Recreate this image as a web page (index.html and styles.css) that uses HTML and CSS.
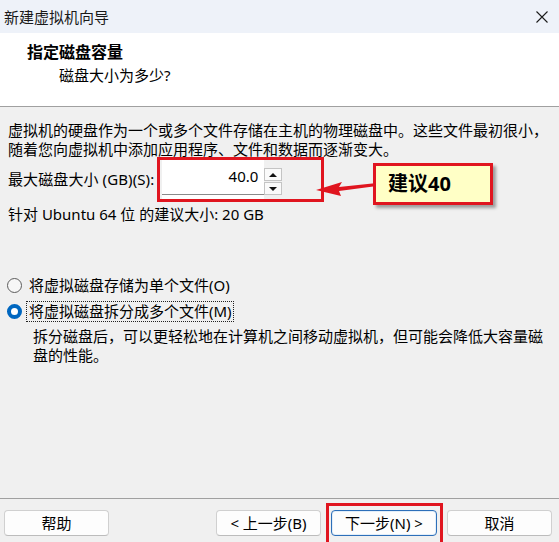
FILE: index.html
```html
<!DOCTYPE html>
<html lang="zh-CN">
<head>
<meta charset="utf-8">
<title>新建虚拟机向导</title>
<link rel="stylesheet" href="styles.css">
</head>
<body>
<div class="window">
  <div class="titlebar">
    <span class="title">新建虚拟机向导</span>
    <svg class="close" width="12" height="12" viewBox="0 0 12 12"><path d="M0.5 0.5 L11.5 11.5 M11.5 0.5 L0.5 11.5" stroke="#1b1b1b" stroke-width="1.1" fill="none"/></svg>
  </div>
  <div class="header">
    <div class="h-title">指定磁盘容量</div>
    <div class="h-sub">磁盘大小为多少?</div>
  </div>
  <div class="content">
    <p class="intro">虚拟机的硬盘作为一个或多个文件存储在主机的物理磁盘中。这些文件最初很小，<br>随着您向虚拟机中添加应用程序、文件和数据而逐渐变大。</p>
    <div class="size-row">
      <span class="size-label">最大磁盘大小 (GB)(S):</span>
      <div class="spin">
        <div class="spin-input">40.0</div>
        <div class="spin-btns">
          <div class="spin-btn"><span class="tri-up"></span></div>
          <div class="spin-btn"><span class="tri-down"></span></div>
        </div>
      </div>
      <svg class="arrow" width="75" height="28" viewBox="0 0 75 28"><polygon points="6,18 32,10 29,15 67,11 67,14 29,19 31,24" fill="#e0151f"/></svg>
      <div class="callout">建议40</div>
    </div>
    <p class="rec">针对 Ubuntu 64 位 的建议大小: 20 GB</p>
    <div class="radio">
      <span class="dot"></span>
      <span class="radio-text">将虚拟磁盘存储为单个文件(O)</span>
    </div>
    <div class="radio">
      <span class="dot checked"></span>
      <span class="radio-text focus">将虚拟磁盘拆分成多个文件(M)</span>
    </div>
    <p class="desc">拆分磁盘后，可以更轻松地在计算机之间移动虚拟机，但可能会降低大容量磁<br>盘的性能。</p>
  </div>
  <div class="footer">
    <button class="btn">帮助</button>
    <div class="btn-group">
      <button class="btn">&lt; 上一步(B)</button>
      <span class="mark-wrap"><button class="btn primary">下一步(N) &gt;</button></span>
      <button class="btn">取消</button>
    </div>
  </div>
</div>
</body>
</html>
```
FILE: styles.css
```css
* { box-sizing: border-box; }
html, body {
  margin: 0;
  padding: 0;
  background: #f0f0f0;
}
body {
  font-family: "Noto Sans", "Noto Sans CJK SC", sans-serif;
  font-size: 15px;
  color: #000;
}
.window {
  width: 559px;
  height: 542px;
  display: flex;
  flex-direction: column;
  overflow: hidden;
  background: #f0f0f0;
}
.titlebar {
  height: 33px;
  flex: none;
  background: #eef2f9;
  display: flex;
  align-items: center;
  justify-content: space-between;
  padding: 0 11px 0 4px;
}
.title {
  font-size: 15px;
  line-height: 20px;
  color: #1a1a1a;
}
.close { display: block; }

.header {
  flex: none;
  height: 74px;
  background: #fff;
  border-bottom: 1px solid #a0a0a0;
  padding-top: 9px;
}
.h-title {
  font-weight: bold;
  font-size: 16px;
  line-height: 20px;
  padding-left: 27px;
}
.h-sub {
  margin-top: 3px;
  font-size: 15px;
  line-height: 20px;
  padding-left: 59px;
}

.content {
  flex: 1;
  padding: 14px 8px 0 8px;
}
.intro {
  margin: 0;
  line-height: 19px;
}
.size-row {
  position: relative;
  display: flex;
  align-items: center;
  margin-top: -2px;
  height: 45px;
}
.size-label {
  line-height: 19px;
  margin-right: 3px;
  letter-spacing: 0.1px;
}
.spin {
  display: flex;
  height: 45px;
  width: 167px;
  border: 3px solid #e0151f;
  padding: 0 38px 0 2px;
}
.spin-input {
  width: 102px;
  height: 39px;
  background: linear-gradient(to bottom, #fff 0 34px, #8a8a8a 34px 35px, #fff 35px);
  display: flex;
  align-items: center;
  justify-content: flex-end;
  padding: 0 6px 6px 0;
  line-height: 19px;
}
.spin-btns {
  margin-top: 8px;
  width: 18px;
  display: flex;
  flex-direction: column;
  gap: 1px;
}
.spin-btn {
  height: 13px;
  background: #fafafa;
  border: 1px solid #c4c4c4;
  display: flex;
  align-items: center;
  justify-content: center;
}
.tri-up {
  width: 0; height: 0;
  border-left: 4px solid transparent;
  border-right: 4px solid transparent;
  border-bottom: 4px solid #111;
}
.tri-down {
  width: 0; height: 0;
  border-left: 4px solid transparent;
  border-right: 4px solid transparent;
  border-top: 4px solid #111;
}
.arrow {
  position: absolute;
  left: 302px;
  top: 15px;
}
.callout {
  position: absolute;
  left: 365px;
  top: 6px;
  width: 120px;
  height: 42px;
  background: #ffffc6;
  border: 3px solid #e0151f;
  box-shadow: 3px 3px 3px rgba(0,0,0,0.35);
  font-weight: bold;
  font-size: 20px;
  line-height: 24px;
  padding: 6px 0 0 12px;
}
.rec {
  margin: 3px 0 0 0;
  line-height: 19px;
}
.radio {
  display: flex;
  align-items: center;
  height: 26px;
}
.rec + .radio { margin-top: 48px; }
.dot {
  width: 15px;
  height: 15px;
  border-radius: 50%;
  border: 1px solid #5c5c5c;
  background: #f7f7f7;
  margin-left: -1px;
  margin-right: 4px;
  flex: none;
}
.dot.checked {
  border: 4.5px solid #0067c0;
  background: #fff;
}
.radio-text {
  line-height: 19px;
  padding: 0 1px 0 2px;
  border: 1px dotted transparent;
}
.radio-text.focus {
  border-color: #222;
}
.desc {
  margin: 3px 0 0 25px;
  line-height: 19px;
}

.footer {
  flex: none;
  height: 44px;
  border-top: 1px solid #a0a0a0;
  display: flex;
  justify-content: space-between;
  padding: 11px 7px 0 4px;
}
.btn-group {
  display: flex;
  gap: 10px;
}
.btn {
  width: 105px;
  height: 26px;
  font-family: inherit;
  font-size: 15px;
  color: #000;
  background: #fdfdfd;
  border: 1px solid #d0d0d0;
  border-bottom-color: #bcbcbc;
  border-radius: 4px;
  padding: 0;
  line-height: 22px;
}
.btn.primary {
  width: 106px;
  border: 1px solid #2d6fb9;
  box-shadow: inset 0 0 0 1px #e3eef9;
}
.mark-wrap {
  position: relative;
  display: block;
}
.mark-wrap::after {
  content: "";
  position: absolute;
  left: -5px;
  right: -6px;
  top: -7px;
  bottom: -10px;
  border: 3px solid #e0151f;
}
```
